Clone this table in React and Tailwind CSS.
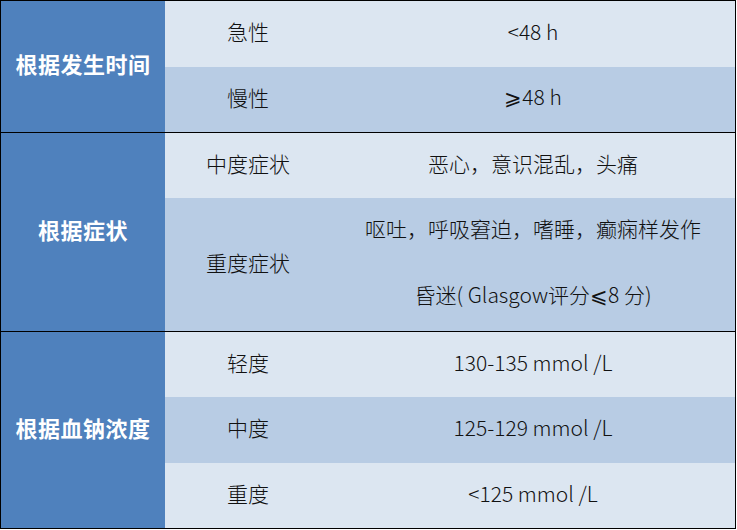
const font = { fontFamily: '"Noto Sans CJK SC", "Noto Sans", sans-serif' };

const LIGHT = 'bg-[#dce6f1]';
const MID = 'bg-[#b8cce4]';

// slanted comparison sign, thinner face
const Cmp = ({ ch }) => (
  <span className="font-extralight" style={{ fontFamily: '"DejaVu Sans", sans-serif' }}>{ch}</span>
);

const Row = ({ h, bg, label, children }) => (
  <div className={`grid grid-cols-[166px_1fr] ${h} ${bg}`}>
    <div className="flex items-center justify-center pb-[4px]">{label}</div>
    <div className="flex flex-col items-center justify-center pb-[4px]">{children}</div>
  </div>
);

const Group = ({ title, last, children }) => (
  <div className={`flex ${last ? '' : 'border-b border-black'}`}>
    <div className="w-[164px] shrink-0 bg-[#4f81bd] flex items-center justify-center pb-[6px] text-white font-bold text-[22px] tracking-[0.5px]">
      {title}
    </div>
    <div className="flex-1 flex flex-col">{children}</div>
  </div>
);

export default function App() {
  return (
    <div className="w-[737px] h-[530px] bg-white" style={font}>
      <div className="w-[736px] h-[529px] border border-black flex flex-col text-[21px] font-light text-[#111]">
        <Group title="根据发生时间">
          <Row h="h-[66px]" bg={LIGHT} label="急性">&lt;48 h</Row>
          <Row h="h-[65px]" bg={MID} label="慢性"><span><Cmp ch="⩾" />48 h</span></Row>
        </Group>
        <Group title="根据症状">
          <Row h="h-[65px]" bg={LIGHT} label="中度症状">恶心，意识混乱，头痛</Row>
          <div className={`grid grid-cols-[166px_1fr] h-[133px] ${MID}`}>
            <div className="flex items-center justify-center pb-[4px]">重度症状</div>
            <div className="flex flex-col">
              <div className="h-[66px] flex items-center justify-center pb-[4px]">呕吐，呼吸窘迫，嗜睡，癫痫样发作</div>
              <div className="h-[67px] flex items-center justify-center pb-[4px]">
                <span>昏迷( Glasgow评分<Cmp ch="⩽" />8 分)</span>
              </div>
            </div>
          </div>
        </Group>
        <Group title="根据血钠浓度" last>
          <Row h="h-[65px]" bg={LIGHT} label="轻度">130-135 mmol /L</Row>
          <Row h="h-[66px]" bg={MID} label="中度">125-129 mmol /L</Row>
          <Row h="h-[65px]" bg={LIGHT} label="重度">&lt;125 mmol /L</Row>
        </Group>
      </div>
    </div>
  );
}
